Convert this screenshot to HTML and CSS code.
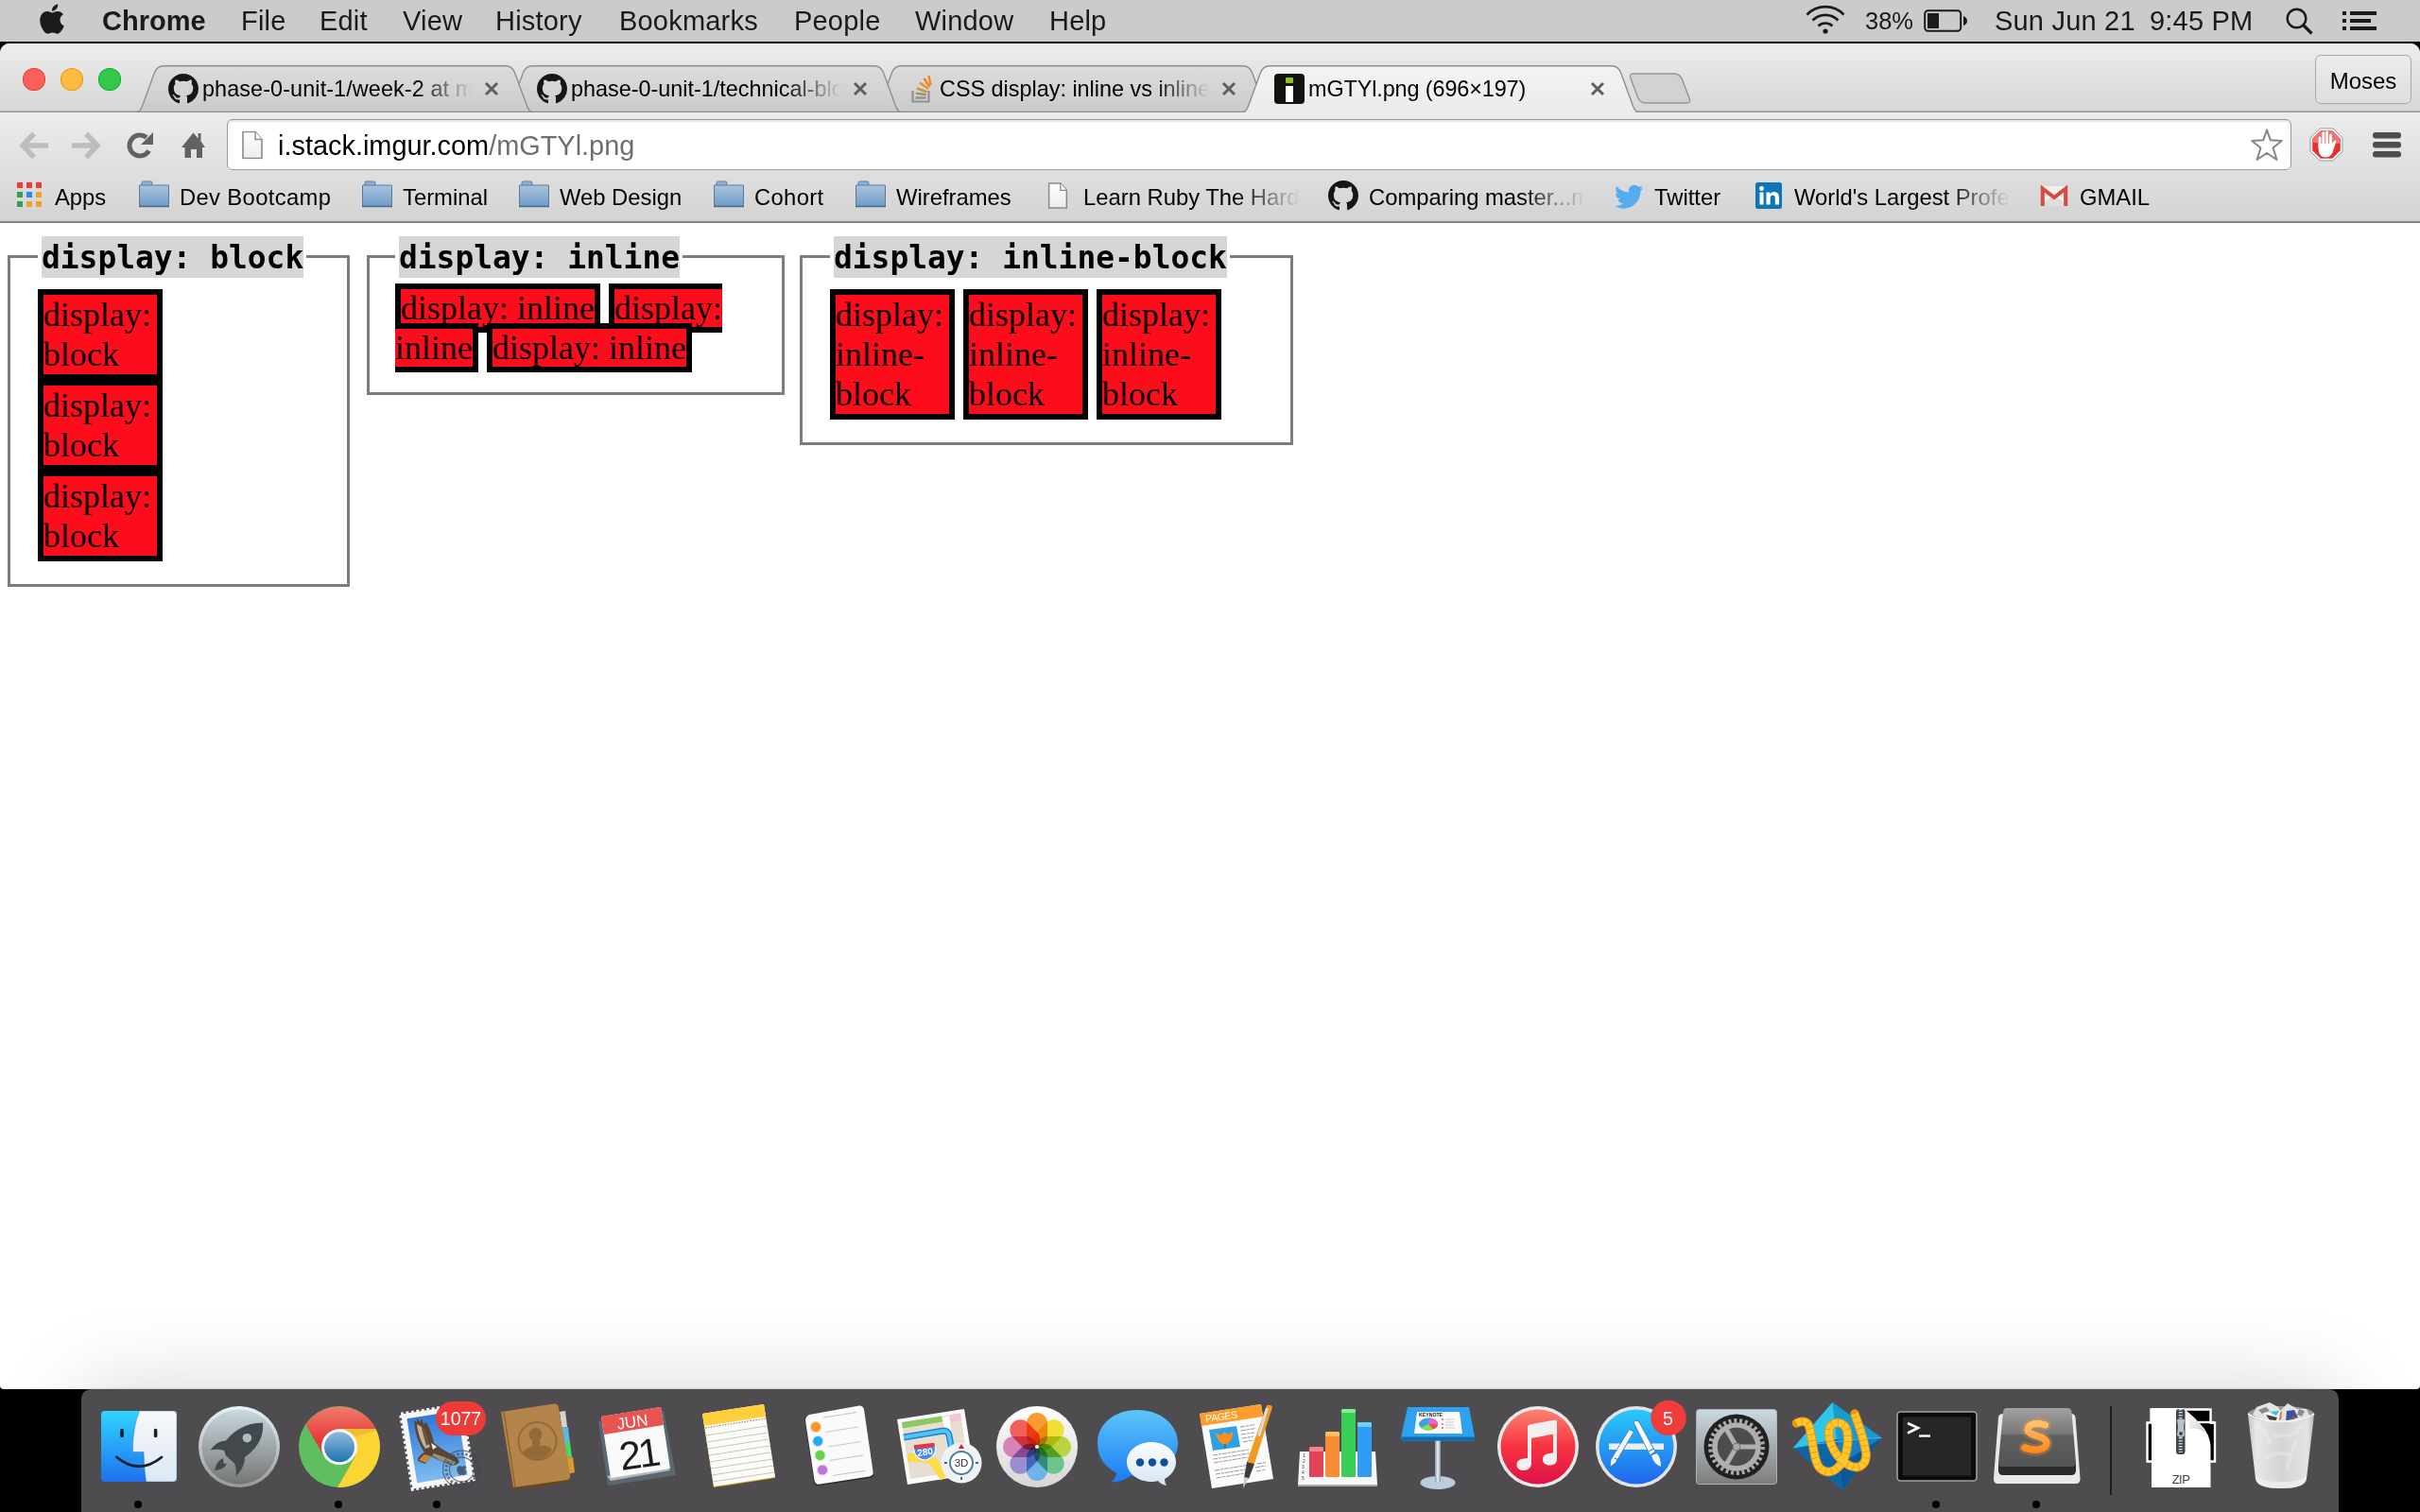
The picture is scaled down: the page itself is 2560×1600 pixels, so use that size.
FILE: index.html
```html
<!DOCTYPE html>
<html lang="en">
<head>
<meta charset="utf-8">
<title>mGTYl.png (696×197)</title>
<link rel="stylesheet" href="styles.css">
</head>
<body>
<svg class="defs" width="0" height="0" aria-hidden="true">
  <defs>
    <linearGradient id="tabFill" x1="0" y1="0" x2="0" y2="1"><stop offset="0" stop-color="#dcdcdc"/><stop offset="1" stop-color="#cbcbcb"/></linearGradient>
    <linearGradient id="tabOn" x1="0" y1="0" x2="0" y2="1"><stop offset="0" stop-color="#f3f3f3"/><stop offset="1" stop-color="#ebebeb"/></linearGradient>
    <linearGradient id="folderFill" x1="0" y1="0" x2="0" y2="1"><stop offset="0" stop-color="#a9c4df"/><stop offset="1" stop-color="#6f9bc6"/></linearGradient>
    <linearGradient id="paper" x1="0" y1="0" x2="0" y2="1"><stop offset="0" stop-color="#fff"/><stop offset="1" stop-color="#ececec"/></linearGradient>
    <symbol id="github" viewBox="0 0 16 16"><path fill="#171515" d="M8 0C3.58 0 0 3.58 0 8c0 3.54 2.29 6.53 5.47 7.59.4.07.55-.17.55-.38 0-.19-.01-.82-.01-1.49-2.01.37-2.53-.49-2.69-.94-.09-.23-.48-.94-.82-1.13-.28-.15-.68-.52-.01-.53.63-.01 1.08.58 1.23.82.72 1.21 1.87.87 2.33.66.07-.52.28-.87.51-1.07-1.78-.2-3.64-.89-3.64-3.95 0-.87.31-1.59.82-2.15-.08-.2-.36-1.02.08-2.12 0 0 .67-.21 2.2.82.64-.18 1.32-.27 2-.27.68 0 1.36.09 2 .27 1.53-1.04 2.2-.82 2.2-.82.44 1.1.16 1.92.08 2.12.51.56.82 1.27.82 2.15 0 3.07-1.87 3.75-3.65 3.95.29.25.54.73.54 1.48 0 1.07-.01 1.93-.01 2.2 0 .21.15.46.55.38A8.013 8.013 0 0016 8c0-4.42-3.58-8-8-8z"/></symbol>
    <symbol id="folder" viewBox="0 0 32 32"><path d="M3 6V2.500q0-1.500 1.500-1.500h8q1.500 0 1.500 1.500v3.500" fill="#8fb0d3" stroke="#5d7f9f"/><path d="M.5 5h31v22.500H.5z" fill="url(#folderFill)" stroke="#5a7c9d"/><path d="M0 27.500h32" stroke="#4a6a88" stroke-width="1.500"/></symbol>
    <symbol id="page" viewBox="0 0 22 30"><path d="M1 1h13l7 8v20H1z" fill="url(#paper)" stroke="#8a8a8a" stroke-width="1.600"/><path d="M14 1v8h7" fill="#fff" stroke="#8a8a8a" stroke-width="1.400"/></symbol>
    <symbol id="close" viewBox="0 0 16 16"><path d="M2 2l12 12M14 2L2 14" stroke="#5f5f5f" stroke-width="3"/></symbol>
    <symbol id="tab" viewBox="0 0 420 50"><path d="M0 49.500C4 49.500 5 47 7 42L19 9C21 3 24 .7 29 .7H391C396 .7 399 3 401 9L413 42C415 47 416 49.500 420 49.500Z" fill="url(#tabFill)" stroke="#8f8f8f" stroke-width="1.400"/></symbol>
    <symbol id="tab-on" viewBox="0 0 420 50"><path d="M0 49.500C4 49.500 5 47 7 42L19 9C21 3 24 .7 29 .7H391C396 .7 399 3 401 9L413 42C415 47 416 49.500 420 49.500" fill="url(#tabOn)" stroke="#8f8f8f" stroke-width="1.400"/><path d="M4 49.500H416" stroke="#ebebeb" stroke-width="2"/></symbol>
  </defs>
</svg>

<header class="menubar">
  <svg class="apple" width="108" height="44" viewBox="0 0 108 44"><path transform="translate(39.400 4.500) scale(1.300)" fill="#1a1a1a" d="M12.152 6.896c-.948 0-2.415-1.078-3.960-1.040-2.040.027-3.910 1.183-4.961 3.014-2.117 3.675-.546 9.103 1.519 12.090 1.013 1.454 2.208 3.090 3.792 3.039 1.520-.065 2.090-.987 3.935-.987 1.831 0 2.350.987 3.960.948 1.637-.026 2.676-1.480 3.676-2.948 1.156-1.688 1.636-3.325 1.662-3.415-.039-.013-3.182-1.221-3.220-4.857-.026-3.040 2.480-4.494 2.597-4.559-1.429-2.090-3.623-2.324-4.390-2.376-2-.156-3.675 1.090-4.610 1.090zM15.530 3.830c.843-1.012 1.400-2.427 1.245-3.830-1.207.052-2.662.805-3.532 1.818-.780.896-1.454 2.338-1.273 3.714 1.338.104 2.715-.688 3.559-1.701"/></svg>
  <span class="app">Chrome</span><span>File</span><span>Edit</span><span>View</span><span>History</span><span>Bookmarks</span><span>People</span><span>Window</span><span>Help</span>
  <svg width="44" height="44" viewBox="0 0 44 44" fill="none" stroke="#1a1a1a" stroke-width="2.600"><path d="M1.500 15.500a27 27 0 0 1 39 0M7.500 21.500a19 19 0 0 1 27 0M13.500 27.500a11 11 0 0 1 15 0"/><circle cx="21" cy="33" r="2.600" fill="#1a1a1a" stroke="none"/></svg>
  <span class="pct">38%</span>
  <svg width="48" height="44" viewBox="0 0 48 44"><rect x="1.200" y="11.200" width="38" height="21.600" rx="3.500" fill="none" stroke="#1a1a1a" stroke-width="2"/><rect x="4" y="14" width="12" height="16" fill="#1a1a1a"/><path d="M42 17q4 1.500 4 5t-4 5z" fill="#1a1a1a"/></svg>
  <span>Sun Jun 21</span><span>9:45 PM</span>
  <svg width="32" height="44" viewBox="0 0 32 44" fill="none" stroke="#1a1a1a"><circle cx="11.500" cy="19.500" r="9.800" stroke-width="2.400"/><path d="M18.500 26.500l9 9" stroke-width="3.200"/></svg>
  <svg width="38" height="44" viewBox="0 0 38 44" fill="#1a1a1a"><path d="M0 12h4v4H0zM8 12h28v4H8zM0 20h4v4H0zM8 20h22v4H8zM0 28h4v4H0zM8 28h28v4H8z"/></svg>
</header>

<main class="window">
  <div class="strip">
    <div class="lights"><i class="red"></i><i class="amber"></i><i class="green"></i></div>
    <div class="tabs">
      <div class="tab t1"><svg class="shape"><use href="#tab"/></svg><svg class="fav"><use href="#github"/></svg><span class="title">phase-0-unit-1/week-2 at master</span><svg class="x"><use href="#close"/></svg></div>
      <div class="tab t2"><svg class="shape"><use href="#tab"/></svg><svg class="fav"><use href="#github"/></svg><span class="title">phase-0-unit-1/technical-blog</span><svg class="x"><use href="#close"/></svg></div>
      <div class="tab t3"><svg class="shape"><use href="#tab"/></svg><svg class="fav" viewBox="0 0 32 32" fill="none"><path d="M7.500 18v11.500h17V18" stroke="#8d8f92" stroke-width="2.200"/><path d="M10.500 25.500h11" stroke="#8d8f92" stroke-width="2.400"/><path d="M10.700 20.600l11 1.600" stroke="#a48f6c" stroke-width="2.400"/><path d="M12 15.500l10.500 3.800" stroke="#c79345" stroke-width="2.400"/><path d="M15 9.500l9 6.500" stroke="#e1902d" stroke-width="2.400"/><path d="M19.500 5l6 9" stroke="#ef8422" stroke-width="2.400"/><path d="M24.500 2l2 10" stroke="#f48024" stroke-width="2.200"/></svg><span class="title">CSS display: inline vs inline-block</span><svg class="x"><use href="#close"/></svg></div>
      <div class="tab t4"><svg class="shape"><use href="#tab-on"/></svg><svg class="fav" viewBox="0 0 32 32"><rect width="32" height="32" rx="4" fill="#131310"/><rect x="12" y="4" width="8" height="6" rx="1" fill="#85c525"/><path d="M12 13h8v17h-8z" fill="#fff"/></svg><span class="title">mGTYl.png (696×197)</span><svg class="x"><use href="#close"/></svg></div>
    </div>
    <svg class="newtab" width="66" height="34" viewBox="0 0 66 34"><path d="M4 1H48q6 0 8.500 6L64 27q2 5-3 5H18q-6 0-8.500-6L2 6Q.5 1 4 1Z" fill="#d2d2d3" stroke="#959595" stroke-width="1.400"/></svg>
    <div class="profile">Moses</div>
  </div>

  <div class="toolbar">
    <svg width="32" height="30" viewBox="0 0 32 30" fill="none" stroke="#bdbdbd" stroke-width="5.500"><path d="M16 2.500L4 15l12 12.500M5 15h26"/></svg>
    <svg width="32" height="30" viewBox="0 0 32 30" fill="none" stroke="#bdbdbd" stroke-width="5.500"><path d="M16 2.500L28 15 16 27.500M27 15H1"/></svg>
    <svg width="30" height="30" viewBox="0 0 30 30"><path d="M23.500 20.500A11 11 0 1 1 21 6.500" fill="none" stroke="#626262" stroke-width="5"/><path d="M28 1v13H15z" fill="#626262"/></svg>
    <svg width="28" height="30" viewBox="0 0 28 30"><path d="M13.500 1.500l5 6V2h3v8.500L26 17h-3v11h-6v-9h-6v9H4.500V17H1z" fill="#626262"/></svg>
    <div class="omnibox">
      <svg width="22" height="31" viewBox="0 0 22 30"><use href="#page"/></svg>
      <span class="url">i.stack.imgur.com<em>/mGTYl.png</em></span>
      <svg class="star" width="36" height="36" viewBox="0 0 36 36"><path d="M18 2.500l3.800 10.800 12 .7-9.300 7.500 4 12.500L18 27 7.500 34l4-12.500L2.200 14l12-.7z" fill="#fff" stroke="#858585" stroke-width="2" stroke-linejoin="round"/></svg>
    </div>
    <svg width="36" height="36" viewBox="0 0 36 36"><path d="M11 1h14l10 10v14L25 35H11L1 25V11z" fill="#fff" stroke="#999"/><path d="M11.800 3.200h12.400l8.600 8.600v12.400l-8.600 8.600H11.800l-8.600-8.600V11.800z" fill="#e8302a"/><path d="M11.800 3.200h12.400l8.600 8.600v5q-14 2-29.600-1v-4z" fill="#f17470"/><path d="M11 11v10M14.800 6v14M18.600 5v15M22.400 8v12" stroke="#fff" stroke-width="2.800" stroke-linecap="round"/><path d="M9.600 17h14l3.200-3.500q2-.5 1.500 1.500l-4 12q-2.500 4.500-7 4.500-7 0-7.700-8z" fill="#fff"/></svg>
    <svg class="burger" width="30" height="28" viewBox="0 0 30 28" fill="#4d4d4d"><rect y="0" width="30" height="6.500" rx="3"/><rect y="10" width="30" height="6.500" rx="3"/><rect y="20" width="30" height="6.500" rx="3"/></svg>
  </div>

  <nav class="bookmarks">
    <div><svg viewBox="0 0 32 32"><path d="M3 2h6v6H3zM13 2h6v6h-6zM23 2h6v6h-6z" fill="#f23c35"/><path d="M3 12h6v6H3zM3 22h6v6H3z" fill="#35a054"/><path d="M13 12h6v6h-6z" fill="#2b88ee"/><path d="M23 12h6v6h-6zM13 22h6v6h-6zM23 22h6v6h-6z" fill="#f3a126"/></svg><span>Apps</span></div>
    <div><svg><use href="#folder"/></svg><span class="wide">Dev Bootcamp</span></div>
    <div><svg><use href="#folder"/></svg><span>Terminal</span></div>
    <div><svg><use href="#folder"/></svg><span>Web Design</span></div>
    <div><svg><use href="#folder"/></svg><span class="wide">Cohort</span></div>
    <div><svg><use href="#folder"/></svg><span>Wireframes</span></div>
    <div><svg viewBox="0 0 32 32"><use href="#page" x="5" y="2" width="22" height="28"/></svg><span class="fade">Learn Ruby The Hard Way</span></div>
    <div><svg><use href="#github"/></svg><span class="fade">Comparing master...master</span></div>
    <div><svg viewBox="0 0 32 32"><path transform="translate(1 2) scale(1.270)" fill="#55acee" d="M23.954 4.569a10 10 0 0 1-2.825.775 4.958 4.958 0 0 0 2.163-2.723c-.951.555-2.005.959-3.127 1.184a4.920 4.920 0 0 0-8.384 4.482C7.691 8.094 4.066 6.130 1.640 3.161a4.822 4.822 0 0 0-.666 2.475c0 1.710.870 3.213 2.188 4.096a4.904 4.904 0 0 1-2.228-.616v.061a4.923 4.923 0 0 0 3.946 4.827 4.996 4.996 0 0 1-2.212.085 4.937 4.937 0 0 0 4.604 3.417 9.868 9.868 0 0 1-6.102 2.105c-.390 0-.779-.023-1.170-.067a13.995 13.995 0 0 0 7.557 2.209c9.054 0 13.999-7.496 13.999-13.986 0-.209 0-.420-.015-.630a9.936 9.936 0 0 0 2.460-2.548z"/></svg><span>Twitter</span></div>
    <div><svg viewBox="0 0 32 32"><rect x="2" y="2" width="28" height="28" rx="2.500" fill="#0e76b4"/><path d="M6.500 12.500h4v13h-4zM13.500 12.500h4v2q1.500-2.400 4.500-2.400 5 0 5 6v7.400h-4.200v-7q0-3-2.400-3-2.700 0-2.700 3.200v6.800h-4.200z" fill="#fff"/><circle cx="8.500" cy="8.500" r="2.400" fill="#fff"/></svg><span class="fade">World's Largest Professional</span></div>
    <div><svg viewBox="0 0 32 32"><path d="M2 6h28v21H2z" fill="#f1f1f1"/><path d="M2 27L16 14l14 13z" fill="#dedede"/><path d="M3.800 27V8.500L16 18 28.200 8.500V27" fill="none" stroke="#d9493d" stroke-width="4"/></svg><span>GMAIL</span></div>
  </nav>

  <section class="page">
    <fieldset class="f1"><legend><span>display: block</span></legend>
      <div class="box">display: block</div><div class="box">display: block</div><div class="box">display: block</div>
    </fieldset>
    <fieldset class="f2"><legend><span>display: inline</span></legend>
      <span class="inl">display: inline</span> <span class="inl">display: inline</span> <span class="inl">display: inline</span>
    </fieldset>
    <fieldset class="f3"><legend><span>display: inline-block</span></legend>
      <div class="box ib">display: inline-block</div> <div class="box ib">display: inline-block</div> <div class="box ib">display: inline-block</div>
    </fieldset>
  </section>
</main>

<footer class="dockrow">
<div class="dock">
  <!-- Finder -->
  <svg viewBox="94 1470 106 130"><defs><linearGradient id="fa" x1="0" y1="0" x2="0" y2="1"><stop offset="0" stop-color="#2fd4fd"/><stop offset="1" stop-color="#2071ee"/></linearGradient><linearGradient id="fb" x1="0" y1="0" x2="0" y2="1"><stop offset="0" stop-color="#f8f8f8"/><stop offset="1" stop-color="#dbe8f4"/></linearGradient></defs>
    <rect x="107" y="1493" width="80" height="75" rx="4" fill="url(#fa)"/><path d="M147.500 1493H183q4 0 4 4v67q0 4-4 4H154.600Q152 1553 152 1536.500H140.500Q140 1512 147.500 1493Z" fill="url(#fb)" stroke="#1e5fae" stroke-opacity=".5" stroke-width=".8"/><path d="M129 1513.500v6M164.600 1513.500v6" stroke="#14202c" stroke-width="3.600" stroke-linecap="round"/><path d="M123.500 1542Q147 1561.500 171 1542" fill="none" stroke="#14202c" stroke-width="2.800" stroke-linecap="round"/><circle cx="146" cy="1592" r="4"/></svg>
  <!-- Launchpad -->
  <svg viewBox="200 1470 106 130"><defs><linearGradient id="la" x1="0" y1="0" x2="0" y2="1"><stop offset="0" stop-color="#c9d8df"/><stop offset="1" stop-color="#757575"/></linearGradient><linearGradient id="lb" x1="0" y1="0" x2="0" y2="1"><stop offset="0" stop-color="#e6f3f8"/><stop offset="1" stop-color="#989898"/></linearGradient></defs>
    <circle cx="253" cy="1531" r="43" fill="url(#lb)"/><circle cx="253" cy="1531" r="39.500" fill="url(#la)"/><path d="M278 1505.500Q253 1506 239 1524.500 229 1525 222.500 1534.500 229 1533 237 1535L239 1540.500 247 1547.500Q251 1553 249.500 1562 259 1553 259 1542 280 1527 278 1505.500Z" fill="#42484c"/><circle cx="261.400" cy="1521.700" r="4.800" fill="#b2bdc3"/><path d="M236 1543q-7 3-9 13 10-.5 13-7.500l-3 .5q-1-2-1-6z" fill="#42484c"/></svg>
  <!-- Chrome -->
  <svg viewBox="306 1470 106 130"><defs><linearGradient id="ca" x1="0" y1="0" x2="0" y2="1"><stop offset="0" stop-color="#f07c69"/><stop offset=".7" stop-color="#e5383a"/></linearGradient><linearGradient id="cb" x1="0" y1="0" x2="0" y2="1"><stop offset="0" stop-color="#8fb9df"/><stop offset="1" stop-color="#1e74b2"/></linearGradient></defs>
    <circle cx="359" cy="1531" r="43" fill="#5fbe60"/><path d="M359 1512H397.500A43 43 0 0 1 357 1574L376 1541Z" fill="#fcd433"/><path d="M323.500 1507.500A43 43 0 0 1 397.500 1512H359L342 1540Z" fill="url(#ca)"/><path d="M364 1512H397.500l.8 2L376 1520z" fill="#e3a32a" opacity=".45"/><circle cx="359" cy="1531.300" r="19" fill="#f7f7f7"/><circle cx="359" cy="1531.300" r="16" fill="url(#cb)"/><circle cx="358" cy="1592" r="4"/></svg>
  <!-- Mail -->
  <svg viewBox="412 1470 106 130"><defs><linearGradient id="ma" x1="0" y1="0" x2="0" y2="1"><stop offset="0" stop-color="#2f79d8"/><stop offset="1" stop-color="#7fbcf0"/></linearGradient></defs>
    <g transform="rotate(-9 462.500 1531)"><rect x="430" y="1491" width="65" height="80" fill="#f7f7f7"/><rect x="430" y="1491" width="65" height="80" fill="none" stroke="#f7f7f7" stroke-width="4" stroke-dasharray="3 2.500"/><rect x="435.500" y="1496.500" width="54" height="69" fill="url(#ma)"/></g>
    <path d="M438 1503l3 2 0-5 3 5 2-4 2 6 3-2Q456 1513 459 1527 466 1533 474 1537 484 1541 486 1547 482 1552 476 1550 464 1545 456 1541L450 1549 442 1546Q441 1541 449 1537 439 1522 438 1503Z" fill="#5b4533"/><path d="M441 1507l5 3 5 13 4 8-5 2q-7-10-9-26z" fill="#c4b49a"/><path d="M446 1512l4 1 4 15-3 2z" fill="#6b543e"/><path d="M459 1538l14 5 9 4-2 3-13-4-10-6z" fill="#9a9081"/><path d="M449 1539l7 2-5 7-8-3z" fill="#bf8945"/><path d="M456 1527l6 4-4 3z" fill="#f2efe8"/>
    <g fill="none" stroke="#39465a" opacity=".65"><circle cx="488.500" cy="1555" r="20" stroke-width="1.300"/><circle cx="488.500" cy="1555" r="13" stroke-width="1.300"/><circle cx="488.500" cy="1555" r="16.500" stroke-width="3" stroke-dasharray="2.500 2"/></g><path transform="translate(482 1548) scale(.54)" fill="#39465a" opacity=".8" d="M12.152 6.896c-.948 0-2.415-1.078-3.960-1.040-2.040.027-3.910 1.183-4.961 3.014-2.117 3.675-.546 9.103 1.519 12.090 1.013 1.454 2.208 3.090 3.792 3.039 1.520-.065 2.090-.987 3.935-.987 1.831 0 2.350.987 3.960.948 1.637-.026 2.676-1.480 3.676-2.948 1.156-1.688 1.636-3.325 1.662-3.415-.039-.013-3.182-1.221-3.220-4.857-.026-3.040 2.480-4.494 2.597-4.559-1.429-2.090-3.623-2.324-4.390-2.376-2-.156-3.675 1.090-4.610 1.090z"/>
    <rect x="461" y="1483" width="53" height="36" rx="18" fill="#ee3b38"/><text class="badge" x="487.500" y="1507.500">1077</text><circle cx="462" cy="1592" r="4"/></svg>
  <!-- Contacts -->
  <svg viewBox="518 1470 106 130"><path d="M592 1494l6-1 2 17-6 1z" fill="#d3d3d3"/><path d="M594 1511l7-1 2 17-6 1z" fill="#5db9da"/><path d="M596 1527l7-1 2 16-6 1z" fill="#4fd467"/><path d="M598 1543l8-1 2 16-7 2z" fill="#e0982b"/><path d="M530 1495L586 1486q4-.5 5 4l12 73q.8 4.500-3 5.500L543 1577z" fill="#6b4722"/><path d="M530 1494L586 1485.500q4-.5 5 4l12 71q.8 4.500-3 5.500L543 1574z" fill="#b3854a"/><path d="M533 1494l12 80" stroke="#8f6531" stroke-width="1.500"/><circle cx="568.500" cy="1525" r="20" fill="none" stroke="#94693a" stroke-width="2"/><circle cx="566.500" cy="1518" r="7" fill="#94693a"/><path d="M553 1537q3-5 10-6.500v-6h8v5.500q9-1 13 4-6 10-15 10-10 0-16-7z" fill="#94693a"/></svg>
  <!-- Calendar -->
  <svg viewBox="624 1470 106 130"><path d="M633 1504l69-11 13 68-72 11z" fill="#596871"/><path d="M642 1562l63-10 4 4-63 11z" fill="#b9b9b5"/><path d="M636 1499l63-10 10 65-63 10z" fill="#fafafa"/><path d="M636 1499l63-10 3 19-63 10z" fill="#e85450"/><g transform="rotate(-8 670 1530)"><text class="cal-m" x="672.500" y="1510.500">JUN</text><text class="cal-d" x="674" y="1554">21</text></g></svg>
  <!-- Notes -->
  <svg viewBox="730 1470 106 130"><path d="M743 1496l65-10 12 78-65 10z" fill="#d9a823"/><path d="M743 1496l65-10 12 77-65 10z" fill="#fbfbf8"/><path d="M743 1496l65-10 2 13-65 10z" fill="#ffcf3a"/><path d="M746 1511l64-10" stroke="#777" stroke-dasharray="1.500 1.500"/><path d="M747 1519l64-10M748 1526l64-10M749 1533l64-10M750 1540l64-10M751 1547l64-10M752 1554l65-10M753 1561l65-10M754 1568l65-10" stroke="#c4c4c4"/></svg>
  <!-- Reminders -->
  <svg viewBox="836 1470 106 130"><path d="M856 1497l53-8q4 0 5 4l10 65q1 5-4 6l-53 8q-5 1-6-4l-10-65q0-5 5-6z" fill="#2a2c30"/><path d="M856 1497l53-9.500q4 0 5 4l9.500 65q1 5-4 6l-52 8q-5 1-6-4l-9.500-63q0-5 4-6.500z" fill="#fafafa"/><g stroke="#ddd" stroke-width="1"><circle cx="863" cy="1510" r="5.500" fill="#ff9421"/><circle cx="865.200" cy="1525" r="5.500" fill="#22aaf8"/><circle cx="867.500" cy="1540" r="5.500" fill="#5fd543"/><circle cx="870" cy="1555.500" r="5.500" fill="#c470de"/></g><path d="M871 1500l35-5.500M873 1515.500l35-5.500M876 1531l35-5.500M878 1545.500l35-5.500M881 1561.500l35-5.500" stroke="#c6c6c6" stroke-width="1.200"/></svg>
  <!-- Maps -->
  <svg viewBox="942 1470 106 130"><path d="M949 1502l71-11 11 69-71 11z" fill="#fbfbfb"/><path d="M954 1505l62-9.500 9 60-62 9.500z" fill="#e6dfd0"/><path d="M954 1505l42-6.500 1 6-42 7z" fill="#8cc963"/><path d="M1005 1497l11-1.500 1 8-11 2z" fill="#f3c6d2"/><path d="M997 1500l7-1.500 9 59-7 1z" fill="#fff"/><path d="M956 1521l42-7q5 0 6 5l5 28" fill="none" stroke="#2183c7" stroke-width="7"/><path d="M956 1521l42-7q5 0 6 5l5 28" fill="none" stroke="#52c3fb" stroke-width="4"/><path d="M960 1543l14-1 13 4 12 18" fill="none" stroke="#fddb47" stroke-width="9"/><g transform="rotate(-7 978 1532)"><path d="M967 1529h22q1 8-2 11-3 4-9 5-6-1-9-5-3-3-2-11z" fill="#4587ee" stroke="#fff"/><path d="M967 1528h22v4h-22z" fill="#e8343c"/><text class="m280" x="978" y="1540">280</text></g><circle cx="1017" cy="1548" r="21.500" fill="#eff2f5"/><circle cx="1017" cy="1548" r="12" fill="#fff" stroke="#4b8297" stroke-width="2"/><path d="M1014 1533l3-5 3 5z" fill="#e11"/><path d="M999 1548h3M1032 1548h3M1017 1563v3" stroke="#333" stroke-width="1.500"/><text class="m3d" x="1017" y="1552">3D</text></svg>
  <!-- Photos -->
  <svg viewBox="1048 1470 106 130"><defs><linearGradient id="pa" x1="0" y1="0" x2="0" y2="1"><stop offset="0" stop-color="#fff"/><stop offset="1" stop-color="#d6d6d6"/></linearGradient></defs><circle cx="1097" cy="1531" r="43" fill="url(#pa)"/>
    <g class="petals"><rect x="1086" y="1495" width="22" height="36" rx="11" fill="#f99b33"/><rect x="1086" y="1495" width="22" height="36" rx="11" fill="#f3df33" transform="rotate(45 1097 1531)"/><rect x="1086" y="1495" width="22" height="36" rx="11" fill="#b8d440" transform="rotate(90 1097 1531)"/><rect x="1086" y="1495" width="22" height="36" rx="11" fill="#6fc28b" transform="rotate(135 1097 1531)"/><rect x="1086" y="1495" width="22" height="36" rx="11" fill="#6db5e6" transform="rotate(180 1097 1531)"/><rect x="1086" y="1495" width="22" height="36" rx="11" fill="#9a8fce" transform="rotate(225 1097 1531)"/><rect x="1086" y="1495" width="22" height="36" rx="11" fill="#d684b6" transform="rotate(270 1097 1531)"/><rect x="1086" y="1495" width="22" height="36" rx="11" fill="#f2605a" transform="rotate(315 1097 1531)"/></g><circle cx="1097" cy="1531" r="2" fill="#fff"/></svg>
  <!-- Messages -->
  <svg viewBox="1154 1470 106 130"><defs><linearGradient id="sa" x1="0" y1="0" x2="0" y2="1"><stop offset="0" stop-color="#5dc5f9"/><stop offset="1" stop-color="#1b7cf3"/></linearGradient><linearGradient id="sb" x1="0" y1="0" x2="0" y2="1"><stop offset="0" stop-color="#fbfdff"/><stop offset="1" stop-color="#d6e5f2"/></linearGradient></defs><path d="M1203 1492c24 0 43 15 43 35s-19 35-43 35q-4 0-7-.5-7 6.500-21 7 6-5 6-10-20-10-20-31.500c0-20 18-35 42-35z" fill="url(#sa)"/><path d="M1218 1526c14 0 26 9 26 21 0 8-5 14-12 18q0 4 2 7-6-1-9-5-3 1-7 1c-14 0-26-9-26-21s12-21 26-21z" fill="url(#sb)"/><g fill="#134e94"><circle cx="1206" cy="1547.500" r="4.200"/><circle cx="1219" cy="1547.500" r="4.200"/><circle cx="1231.500" cy="1547.500" r="4.200"/></g></svg>
  <!-- Pages -->
  <svg viewBox="1260 1470 106 130"><path d="M1269 1496l65-10 13 79-65 10z" fill="#fcfcfc"/><path d="M1269 1496l65-10 2 13-65 10z" fill="#fd9d2b"/><text class="pages" transform="rotate(-8 1276 1506)" x="1276" y="1505">PAGES</text><path d="M1279 1513l29-4 4 22-29 4z" fill="#2f9fe6"/><path d="M1286 1516l5 3 4-4 4 3 5-3q1 10-8 14-8-2-10-13z" fill="#fb8e1d"/><path d="M1296 1528v5" stroke="#3b7a35" stroke-width="1.500"/><g stroke="#9a9a9a" stroke-width="1" stroke-dasharray="5 1 3 1"><path d="M1312 1510l16-2.500M1312.500 1514l16-2.500M1313 1518l14-2M1314 1522l12-2M1315 1526l11-2M1283 1540l38-6M1283.500 1544l38-6M1284 1548l36-6M1285 1556l34-5.500M1286 1560l32-5M1287 1564l30-5M1328 1553l11-2M1329 1557l10-2M1330 1549l9-1.500"/></g><path d="M1340 1487q5-1 6 2l-19 60-8-2z" fill="#f39a22"/><path d="M1339 1490l3 0-9 30-3-1z" fill="#d7dde4"/><path d="M1319 1547l8 2-6 16-5-1z" fill="#3c3c3f"/><path d="M1316 1563l5 1-6 11z" fill="#c9d3dc"/></svg>
  <!-- Numbers -->
  <svg viewBox="1366 1470 106 130"><path d="M1375 1536h80l2 35h-84z" fill="#f7f7f7"/><path d="M1373 1571h84v2h-84z" fill="#aaa"/><g class="nums"><text x="1378" y="1542">1</text><text x="1378" y="1548">2</text><text x="1377" y="1554">3</text><text x="1377" y="1560">4</text><text x="1377" y="1566">5</text></g><rect x="1385" y="1531" width="15" height="32" rx="1.500" fill="#e34258"/><rect x="1385" y="1531" width="15" height="5" rx="1.500" fill="#f78287"/><rect x="1402" y="1515" width="15" height="48" rx="1.500" fill="#f68c33"/><rect x="1402" y="1515" width="15" height="5" rx="1.500" fill="#fcc062"/><rect x="1419" y="1491" width="15" height="72" rx="1.500" fill="#39ce55"/><rect x="1419" y="1491" width="15" height="4" rx="1.500" fill="#7cf093"/><rect x="1436" y="1505" width="15" height="58" rx="1.500" fill="#2f9bf3"/><rect x="1436" y="1505" width="15" height="5" rx="1.500" fill="#6fcffb"/></svg>
  <!-- Keynote -->
  <svg viewBox="1472 1470 106 130"><defs><linearGradient id="ka" x1="0" x2="1" y1="0" y2="0"><stop offset="0" stop-color="#8496a8"/><stop offset=".5" stop-color="#eef3f8"/><stop offset="1" stop-color="#7f8fa0"/></linearGradient></defs><ellipse cx="1521" cy="1569" rx="18.500" ry="7" fill="#bccddc"/><rect x="1518" y="1524" width="6" height="44" fill="url(#ka)"/><path d="M1489 1489h65l6 32-1.500 3.500h-75L1482 1521z" fill="#2da2f1"/><path d="M1482 1520.500h78l-1.500 4h-75z" fill="#1068ae"/><path d="M1499 1494h45l3 23h-51z" fill="#fafafa"/><text class="keynote" x="1501" y="1498.500">KEYNOTE</text><ellipse cx="1511" cy="1507" rx="10" ry="6.500" fill="#36a3e8"/><path d="M1511 1507l1-6.500q9 1 9 6.500z" fill="#df68d9"/><path d="M1511 1507h10q0 4-5 5.500z" fill="#f05053"/><path d="M1511 1507l5 5.500q-8 3-13-1.500z" fill="#8fdc50"/><path d="M1525 1502h2M1525 1507h2M1525 1511h2" stroke="#e5504f" stroke-width="1.600"/><path d="M1529 1502h9M1529 1505h9M1529 1508h9M1529 1511h10" stroke="#c8c8c8"/></svg>
  <!-- iTunes -->
  <svg viewBox="1578 1470 106 130"><defs><linearGradient id="ia" x1="0" y1="0" x2="0" y2="1"><stop offset="0" stop-color="#fc836f"/><stop offset=".5" stop-color="#f63340"/><stop offset="1" stop-color="#dc1247"/></linearGradient></defs><circle cx="1627" cy="1531" r="43" fill="#e9e9e9"/><circle cx="1627" cy="1531" r="39.500" fill="url(#ia)"/><path d="M1616 1510q0-2 2-2.500l27-5q2 0 2 2v39c0 5-3 7-7.500 7-5 0-7.500-2.500-7.500-6 0-4 3-6 7-6.500l4-.5v-20l-23 4.500v26c0 5-3.500 8-8.500 8-4.500 0-7-2.500-7-6 0-4 3-6 7-6.500l4.500-.5z" fill="#f0f0f1"/></svg>
  <!-- App Store -->
  <svg viewBox="1684 1470 106 130"><defs><linearGradient id="aa" x1="0" y1="0" x2="0" y2="1"><stop offset="0" stop-color="#29c9fb"/><stop offset="1" stop-color="#2067ec"/></linearGradient></defs><circle cx="1731" cy="1531" r="43" fill="#e4e4e6"/><circle cx="1731" cy="1531" r="39.500" fill="url(#aa)"/><path d="M1702 1527.500h58v6.500h-58z" fill="#e8edf3"/><path d="M1723.500 1512.500l5 2.500-19.500 33-6 4.500 1-8z" fill="#f5f6f8" stroke="#246fc4" stroke-width=".8"/><path d="M1728 1505q3-3.500 6 0l17 31-5.500 4z" fill="#fbfbfc" stroke="#246fc4" stroke-width=".8"/><path d="M1747 1540l6-2q4 5 4 14-8-3-10-12z" fill="#f2f2f4"/><path d="M1744 1536l6-3.500M1708 1543l6 3" stroke="#2a8bea" stroke-width="1.200"/><circle cx="1765" cy="1500.500" r="18.800" fill="#ef3d3a"/><text class="badge" x="1764.500" y="1507.500">5</text></svg>
  <!-- System Preferences -->
  <svg viewBox="1790 1470 106 130"><defs><linearGradient id="ga" x1="0" y1="0" x2="0" y2="1"><stop offset="0" stop-color="#cbdbe2"/><stop offset="1" stop-color="#7c7c7c"/></linearGradient></defs><rect x="1794.500" y="1491.500" width="85" height="79" rx="3" fill="url(#ga)" stroke="#a9b2b6"/><circle cx="1837" cy="1531" r="34.500" fill="#1f2123"/><circle cx="1837" cy="1531" r="27.700" fill="none" stroke="#a9a9a7" stroke-width="4.500" stroke-dasharray="3 2.800"/><circle cx="1837" cy="1531" r="23" fill="#4d4d4d" stroke="#b0afad" stroke-width="5.500"/><path d="M1837 1531h21M1837 1531l-11-19M1837 1531l-11 19" stroke="#b0afad" stroke-width="5"/><circle cx="1837" cy="1531" r="4" fill="#a3aab0" stroke="#777"/></svg>
  <!-- TextWrangler -->
  <svg viewBox="1896 1470 106 130"><path d="M1938.500 1484L1990.500 1521.500 1949.500 1577 1897 1532z" fill="#117fc0"/><path d="M1938.500 1484L1990.500 1521.500 1943 1523z" fill="#1a9bd0"/><path d="M1938.500 1484L1897 1532 1943 1523z" fill="#2fc6ec"/><path d="M1897 1532L1949.500 1577 1943 1523z" fill="#0d65a6"/><path d="M1990.500 1521.500L1949.500 1577 1946 1550z" fill="#0d5796"/><path d="M1897 1532l24-4 45-5 24.500-1.500" fill="none" stroke="#46b9e6" stroke-width="1"/><g fill="none"><path d="M1900.500 1506Q1911 1501 1914 1510C1917 1522 1918 1535 1921 1545C1924 1558 1936 1561 1944 1553C1954 1545 1956 1525 1954 1515C1952 1503 1938 1503 1935 1512C1933 1528 1944 1545 1957 1551C1968 1556 1975 1548 1974 1538C1972 1522 1966 1508 1962 1496" stroke="#e8980f" stroke-width="9.500" stroke-linecap="round"/><path d="M1900.500 1506Q1911 1501 1914 1510C1917 1522 1918 1535 1921 1545C1924 1558 1936 1561 1944 1553C1954 1545 1956 1525 1954 1515C1952 1503 1938 1503 1935 1512C1933 1528 1944 1545 1957 1551C1968 1556 1975 1548 1974 1538C1972 1522 1966 1508 1962 1496" stroke="#fec52c" stroke-width="7.500" stroke-dasharray="5.500 .8"/></g></svg>
  <!-- Terminal -->
  <svg viewBox="2002 1470 106 130"><rect x="2007" y="1494" width="84" height="73" rx="3.500" fill="#0c0c0c" stroke="#9aa3a8" stroke-width="1.600"/><rect x="2013" y="1499.500" width="72" height="62" fill="#262626"/><path d="M2018 1506l11 5-11 5.500" fill="none" stroke="#fff" stroke-width="2.600"/><path d="M2030 1519.500h12" stroke="#fff" stroke-width="2.400"/><circle cx="2048" cy="1592" r="4"/></svg>
  <!-- Sublime Text -->
  <svg viewBox="2108 1470 106 130"><defs><linearGradient id="ua" x1="0" y1="0" x2="0" y2="1"><stop offset="0" stop-color="#a2a2a2"/><stop offset=".45" stop-color="#767676"/><stop offset=".46" stop-color="#5f5f5f"/><stop offset="1" stop-color="#555"/></linearGradient><linearGradient id="ub" x1="0" y1="0" x2="0" y2="1"><stop offset="0" stop-color="#ffc069"/><stop offset="1" stop-color="#ff8a1c"/></linearGradient></defs><path d="M2119 1496h72q4 0 4.500 4l5 64q.5 6-5 6h-82q-5 0-4.500-6l5-64q.5-4 5-4z" fill="#e9e9e9"/><path d="M2114 1548h82v8q0 5-5 5h-72q-5 0-5-5z" fill="#2b2b2b"/><path d="M2123 1490h64q4 0 4.500 4l4.500 54q.3 4-4 4h-74q-4.500 0-4-4l5-54q.5-4 4-4z" fill="url(#ua)"/><path d="M2163.500 1508Q2154 1505 2147.500 1508.500 2142 1514 2149 1517.500 2153 1519 2159 1521 2168 1525 2163.500 1531 2155 1537 2142 1532" fill="none" stroke="#ff9d34" stroke-opacity=".25" stroke-width="13" stroke-linecap="round"/><path d="M2163.500 1508Q2154 1505 2147.500 1508.500 2142 1514 2149 1517.500 2153 1519 2159 1521 2168 1525 2163.500 1531 2155 1537 2142 1532" fill="none" stroke="url(#ub)" stroke-width="7.500" stroke-linecap="round"/><circle cx="2154" cy="1592" r="4"/></svg>
  <svg class="sep" viewBox="2214 1470 40 130"><path d="M2233 1488v94" stroke="#1f1f1f" stroke-width="2"/></svg>
  <!-- Archive -->
  <svg viewBox="2254 1470 106 130"><defs><linearGradient id="za" x1="0" y1="0" x2="1" y2="1"><stop offset="0" stop-color="#fff"/><stop offset="1" stop-color="#ccc"/></linearGradient></defs><path d="M2275.500 1491.500h63v14h4.500v41h-71.500v-41h4z" fill="#000" stroke="#fff" stroke-width="2.400"/><path d="M2310 1505h32" stroke="#fff" stroke-width="2.400"/><path d="M2276 1490h34q12 10 22 22 7 10 6.500 22v40h-62.500z" fill="#fff"/><path d="M2314 1494q2 8 2 18 9-2 18 5-8-13-20-23z" fill="url(#za)"/><rect x="2302" y="1491" width="9.500" height="48" rx="3" fill="#3e4347"/><path d="M2306.700 1491v46" stroke="#c9ced1" stroke-width="4" stroke-dasharray="1.500 1.500"/><path d="M2303 1502h8l-1 8 1 9q-4 4-8 0l1-9z" fill="#b5c4cd"/><circle cx="2307" cy="1517" r="2" fill="#444"/><text class="zip" x="2307" y="1569.500">ZIP</text></svg>
  <!-- Trash -->
  <svg viewBox="2360 1470 106 130"><defs><linearGradient id="ta" x1="0" x2="1" y1="0" y2="0"><stop offset="0" stop-color="#c2c2c2"/><stop offset=".12" stop-color="#e8e8e8"/><stop offset=".5" stop-color="#d4d4d2"/><stop offset=".9" stop-color="#e4e4e4"/><stop offset="1" stop-color="#b8b8b8"/></linearGradient></defs><ellipse cx="2413" cy="1496" rx="35" ry="8" fill="#9b9b9b"/><path d="M2383 1497l4-8 14-5 9 5 2 4 8-8 10 6 10 0 4 9-16 5h-32z" fill="#e3e3e3"/><path d="M2389 1492l8-3 4 4-8 3zM2432 1491l6 2-3 6-5-2z" fill="#8a8a8a"/><path d="M2394 1495l18-2v9l-10 2z" fill="#f4f4f4"/><path d="M2397 1497l12 3-2 4-6-1z" fill="#4b3638"/><path d="M2401 1494l10-1-3 5z" fill="#2fc0dc"/><path d="M2419 1493l8-1 4 8-13 4z" fill="#36549c"/><path d="M2412 1495l2-2-1 9-2 1z" fill="#e2672b"/><path d="M2424 1499l5 0-3 4z" fill="#d6432b"/><path d="M2378 1497q10 8 35 8t35-8l-8 68q-1 10-27 10t-27-10z" fill="url(#ta)"/><path d="M2378 1496q10 8 35 8t35-8" fill="none" stroke="#f2f2f2" stroke-width="1.800"/><path d="M2387 1560q3 8 26 8t27-8l-1 6q-2 9-26 9t-26-9z" fill="#f2f2f2" opacity=".7"/><path d="M2388 1508q14 10 12 20M2434 1510q-8 12-30 9M2394 1545q16-12 30-4M2428 1525l-9 30" fill="none" stroke="#f0f0f0" stroke-width="4" opacity=".4"/></svg>
</div>
</footer>
</body>
</html>
```
FILE: styles.css
```css
* { box-sizing: border-box; }
html, body { margin: 0; height: 100%; }
body {
  width: 2560px;
  height: 1600px;
  overflow: hidden;
  display: flex;
  flex-direction: column;
  background: #000;
  font-family: "Liberation Sans", Arial, sans-serif;
  color: #000;
}
svg { display: block; }
.defs { position: absolute; }

/* System menu bar */
.menubar {
  height: 44px;
  flex: none;
  display: grid;
  grid-template-columns: 108px 147px 83px 88px 98px 131px 185px 128px 142px 800px 63px 62px 75px 164px 144px 60px 82px;
  background: #cbcbcb;
  font-size: 29px;
  line-height: 45px;
  color: #1a1a1a;
  white-space: nowrap;
}
.menubar span { letter-spacing: .2px; }
.menubar .app { font-weight: bold; letter-spacing: 0; }
.menubar .pct { font-size: 25.5px; letter-spacing: 0; }

/* Browser window */
.window {
  height: 1424px;
  margin-top: 2px;
  flex: none;
  display: flex;
  flex-direction: column;
  border-radius: 10px 10px 4px 4px;
  overflow: hidden;
  background: #fff;
}
.strip {
  height: 73px;
  flex: none;
  display: flex;
  background: linear-gradient(#ededed, #d6d6d6);
  box-shadow: inset 0 -1.5px #969696;
}
.lights { width: 144px; display: flex; gap: 16px; padding: 26px 0 0 24px; }
.lights i { width: 24px; height: 24px; border-radius: 50%; }
.red { background: #fc605b; box-shadow: inset 0 0 0 1px #e2463f; }
.amber { background: #fdbc40; box-shadow: inset 0 0 0 1px #e1a116; }
.green { background: #34c84a; box-shadow: inset 0 0 0 1px #1dad2b; }
.tabs { display: flex; padding-top: 23px; }
.tab {
  position: relative;
  width: 420px;
  height: 50px;
  flex: none;
  display: flex;
  padding: 9px 0 0 34px;
  margin-right: -30px;
  font-size: 23.4px;
  line-height: 33px;
}
.t1 { z-index: 3; } .t2 { z-index: 2; } .t3 { z-index: 1; } .t4 { z-index: 4; }
.shape { position: absolute; left: 0; top: 0; width: 420px; height: 50px; overflow: visible; }
.fav { position: relative; width: 32px; height: 32px; margin-right: 4px; flex: none; }
.title {
  position: relative;
  width: 288px;
  overflow: hidden;
  white-space: nowrap;
  -webkit-mask-image: linear-gradient(90deg, #000 225px, transparent 286px);
  mask-image: linear-gradient(90deg, #000 225px, transparent 286px);
}
.t1 .title { letter-spacing: .1px; }
.t4 .title { letter-spacing: -.1px; }
.x { position: relative; width: 16px; height: 16px; margin: 8px 0 0 10px; }
.newtab { margin: 31px 0 0 19px; }
.profile {
  width: 102px;
  height: 52px;
  margin: 12px 9px 0 auto;
  border: 1.5px solid #a8a8a8;
  border-radius: 6px;
  background: linear-gradient(#ececec, #dedede);
  font-size: 24px;
  line-height: 54px;
  text-align: center;
}

.toolbar {
  height: 66px;
  flex: none;
  display: grid;
  grid-template-columns: 55px 59px 57px 49px 2203px 67px 50px;
  padding-left: 20px;
  background: linear-gradient(#ececec, #dedede);
}
.toolbar > svg { margin-top: 20px; }
.toolbar > svg:nth-last-child(2) { margin-top: 16px; }
.toolbar > .burger { margin-top: 21px; }
.omnibox {
  width: 2184px;
  height: 54px;
  margin-top: 7px;
  display: flex;
  align-items: center;
  padding: 0 7px 0 15px;
  background: #fff;
  border: 1.5px solid #9a9a9a;
  border-radius: 6px;
  box-shadow: inset 0 2px 2px #e4e4e4;
}
.url { flex: 1; margin-left: 16px; padding-top: 2px; font-size: 28.9px; }
.url em { font-style: normal; color: #6e6e6e; }

.bookmarks {
  height: 51px;
  flex: none;
  display: grid;
  grid-template-columns: 132px 236px 166px 206px 150px 198px 302px 302px 148px 302px 200px;
  padding-left: 15px;
  background: linear-gradient(#dedede, #d3d3d3);
  border-bottom: 2px solid #858585;
  font-size: 23.8px;
  line-height: 47px;
}
.bookmarks div { display: flex; white-space: nowrap; }
.bookmarks svg { width: 32px; height: 32px; margin: 6px 11px 0 0; flex: none; }
.bookmarks .wide { letter-spacing: .35px; }
.bookmarks .fade {
  width: 229px;
  overflow: hidden;
  -webkit-mask-image: linear-gradient(90deg, #000 160px, transparent 229px);
  mask-image: linear-gradient(90deg, #000 160px, transparent 229px);
}

/* Document */
.page {
  flex: 1;
  display: flex;
  align-items: flex-start;
  padding: 14px 0 0 8px;
  font: 36px/42px "Liberation Serif", "Times New Roman", serif;
}
fieldset { margin: 0; border: 3px solid #7d7d7d; min-width: 0; }
legend { height: 43px; padding: 0 3px 0 4px; }
legend span {
  display: block;
  height: 44px;
  background: #d6d6d6;
  font: bold 32.9px/46px "DejaVu Sans Mono", monospace;
  white-space: nowrap;
}
.f1 { width: 362px; height: 371px; padding: 13px 0 0 29px; }
.f2 { width: 442px; height: 168px; padding: 12px 34px 0 27px; margin-left: 18px; }
.f3 { width: 522px; height: 221px; padding: 13px 0 0 29px; margin-left: 16px; }
.box { width: 132px; border: 6px solid #000; background: #fd0d1b; }
.ib { display: inline-block; vertical-align: top; }
.inl { border: 6px solid #000; background: #fd0d1b; }

/* Dock */
.dockrow { height: 130px; flex: none; display: flex; padding-left: 86px; }
.dock {
  width: 2388px;
  display: grid;
  grid-template-columns: repeat(20, 106px) 40px 106px 106px;
  padding: 0 8px;
  background: #4e4c4e;
  border-radius: 10px 10px 0 0;
  box-shadow: 0 0 2px rgba(0,0,0,.35), 0 0 90px rgba(0,0,0,.17);
}
.dock svg { width: 106px; height: 130px; overflow: visible; }
.dock .sep { width: 40px; }
.petals { isolation: isolate; }
.petals rect { mix-blend-mode: multiply; }
.dock text { font-family: "Liberation Sans", Arial, sans-serif; }
.badge { fill: #fff; font-size: 19.5px; text-anchor: middle; }
.cal-m { fill: #fff; font-size: 17px; text-anchor: middle; }
.cal-d { fill: #1c1c1c; font-size: 42px; text-anchor: middle; letter-spacing: -3px; }
.m280 { fill: #fff; font-size: 10px; font-weight: bold; text-anchor: middle; }
.m3d { fill: #333; font-size: 11.5px; text-anchor: middle; }
.pages { fill: #fff; font-size: 10.5px; letter-spacing: -.4px; }
.nums text { fill: #444; font-size: 5px; }
.keynote { fill: #222; font-size: 5.2px; font-weight: bold; }
.zip { fill: #444; font-size: 13px; text-anchor: middle; letter-spacing: -.5px; }
```
